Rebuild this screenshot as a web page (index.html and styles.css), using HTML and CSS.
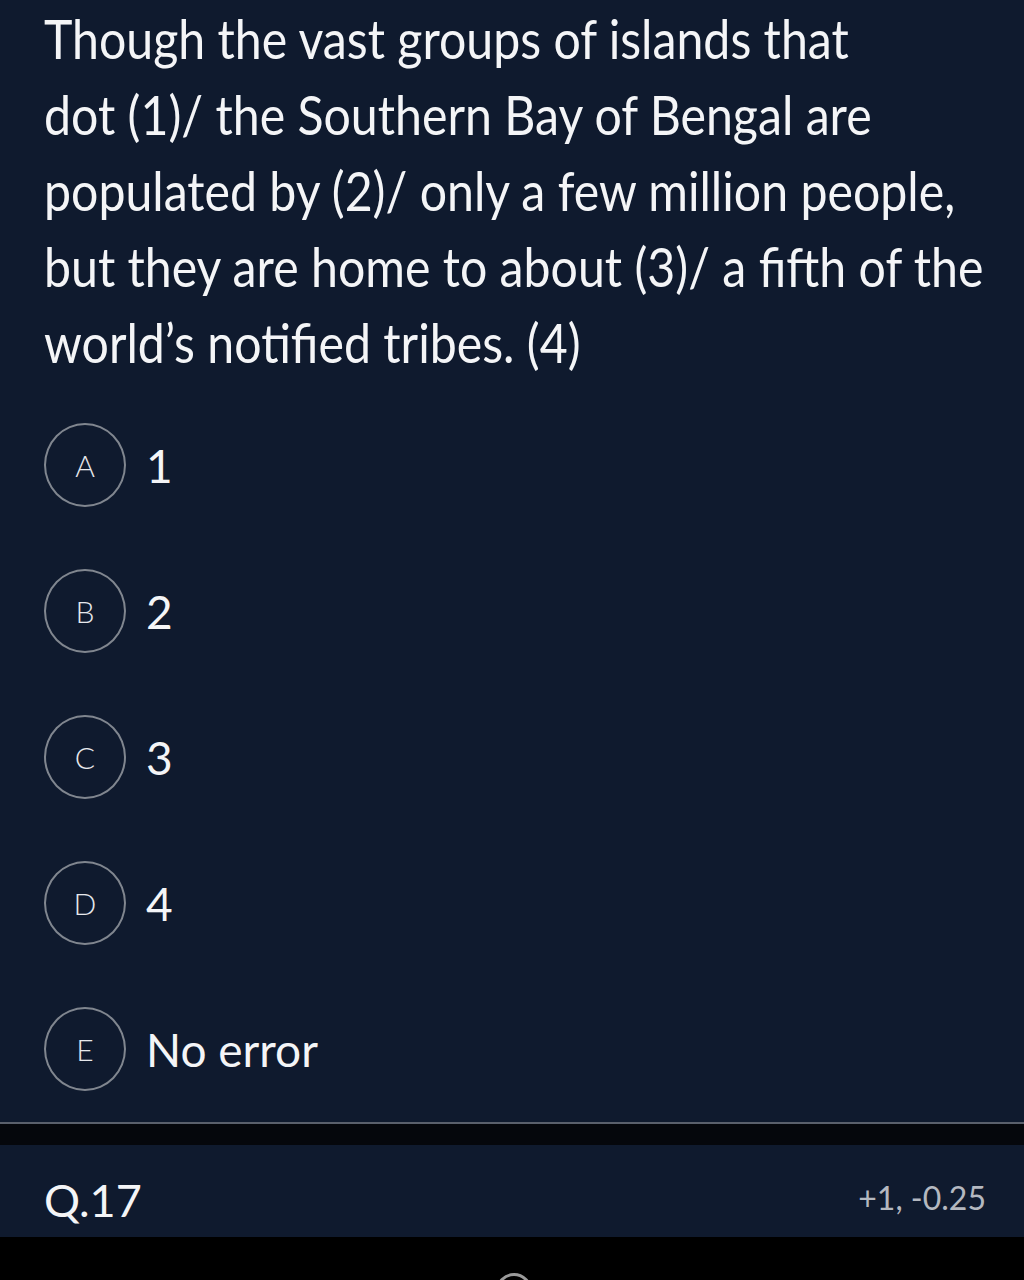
FILE: index.html
```html
<!DOCTYPE html>
<html>
<head>
<meta charset="utf-8">
<link rel="stylesheet" href="styles.css">
</head>
<body>
<main class="question">
  <p class="stem">Though the vast groups of islands that<br>dot (1)/ the Southern Bay of Bengal are<br>populated by (2)/ only a few million people,<br>but they are home to about (3)/ a fifth of the<br>world’s notified tribes. (4)</p>
  <ul class="options">
    <li class="option"><span class="badge">A</span><span class="label">1</span></li>
    <li class="option"><span class="badge">B</span><span class="label">2</span></li>
    <li class="option"><span class="badge">C</span><span class="label">3</span></li>
    <li class="option"><span class="badge">D</span><span class="label">4</span></li>
    <li class="option"><span class="badge">E</span><span class="label">No error</span></li>
  </ul>
</main>
<div class="divider"></div>
<section class="next">
  <span class="qno">Q.17</span>
  <span class="marks">+1, -0.25</span>
</section>
<footer class="navbar"><span class="arc"></span></footer>
</body>
</html>
```
FILE: styles.css
```css
html, body {
  margin: 0;
  padding: 0;
  background: #000;
}
body {
  width: 1024px;
  height: 1280px;
  overflow: hidden;
  font-family: Lato, "Noto Sans", sans-serif;
  color: #f4f5f7;
}
.question {
  background: #0f1a2e;
  padding: 0 20px 0 44px;
  height: 1124px;
  box-sizing: border-box;
  border-bottom: 2px solid #5a606c;
  overflow: hidden;
}
.stem {
  margin: 0;
  font-size: 55px;
  line-height: 76px;
  white-space: nowrap;
  transform: scaleX(0.877);
  transform-origin: left top;
}
.options {
  list-style: none;
  margin: 44px 0 0 0;
  padding: 0;
  display: flex;
  flex-direction: column;
  gap: 64px;
}
.option {
  display: flex;
  align-items: center;
  gap: 20px;
  height: 82px;
}
.badge {
  width: 78px;
  height: 80px;
  border: 2px solid #80868f;
  border-radius: 50%;
  display: flex;
  align-items: center;
  justify-content: center;
  font-size: 30px;
  font-weight: 300;
  color: #e6e8ec;
  flex: none;
}
.label {
  font-size: 46px;
}
.divider {
  height: 21px;
  background: #05070c;
}
.next {
  background: #0f1a2e;
  height: 92px;
  padding: 0 38px 0 44px;
  display: flex;
  align-items: center;
  justify-content: space-between;
}
.qno {
  font-size: 45px;
  padding-top: 18px;
}
.marks {
  font-size: 32px;
  color: #b4b8c0;
  padding-top: 12px;
}
.navbar {
  height: 43px;
  background: #000;
  position: relative;
  overflow: hidden;
}
.arc {
  position: absolute;
  left: 496px;
  top: 36px;
  width: 30px;
  height: 30px;
  border-radius: 50%;
  border: 3px solid #9a9a9a;
}
```
